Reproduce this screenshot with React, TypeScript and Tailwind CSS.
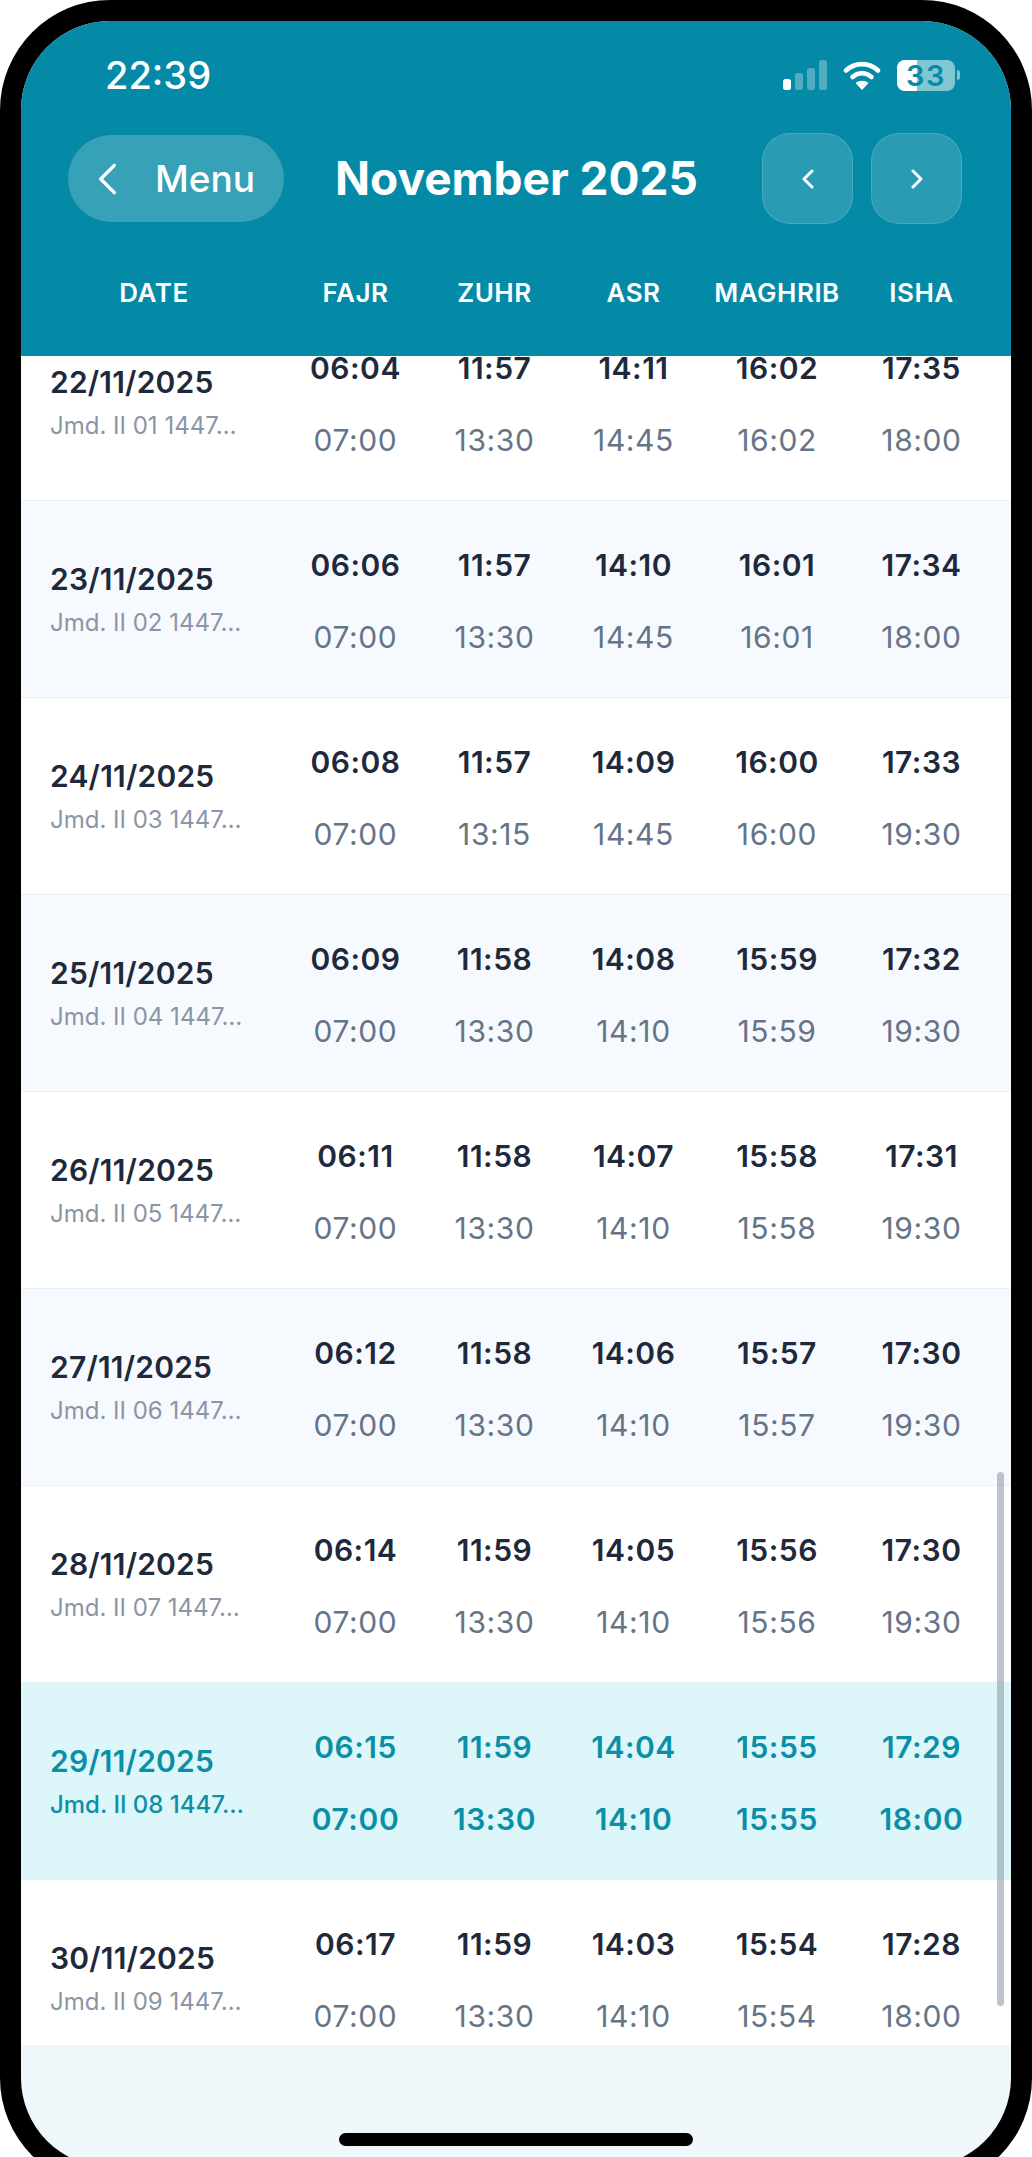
import React from 'react';

type Day = { date: string; hijri: string; athan: string[]; iqama: string[]; today?: boolean };

const days: Day[] = [
  { date: '22/11/2025', hijri: 'Jmd. II 01 1447…', athan: ['06:04', '11:57', '14:11', '16:02', '17:35'], iqama: ['07:00', '13:30', '14:45', '16:02', '18:00'] },
  { date: '23/11/2025', hijri: 'Jmd. II 02 1447…', athan: ['06:06', '11:57', '14:10', '16:01', '17:34'], iqama: ['07:00', '13:30', '14:45', '16:01', '18:00'] },
  { date: '24/11/2025', hijri: 'Jmd. II 03 1447…', athan: ['06:08', '11:57', '14:09', '16:00', '17:33'], iqama: ['07:00', '13:15', '14:45', '16:00', '19:30'] },
  { date: '25/11/2025', hijri: 'Jmd. II 04 1447…', athan: ['06:09', '11:58', '14:08', '15:59', '17:32'], iqama: ['07:00', '13:30', '14:10', '15:59', '19:30'] },
  { date: '26/11/2025', hijri: 'Jmd. II 05 1447…', athan: ['06:11', '11:58', '14:07', '15:58', '17:31'], iqama: ['07:00', '13:30', '14:10', '15:58', '19:30'] },
  { date: '27/11/2025', hijri: 'Jmd. II 06 1447…', athan: ['06:12', '11:58', '14:06', '15:57', '17:30'], iqama: ['07:00', '13:30', '14:10', '15:57', '19:30'] },
  { date: '28/11/2025', hijri: 'Jmd. II 07 1447…', athan: ['06:14', '11:59', '14:05', '15:56', '17:30'], iqama: ['07:00', '13:30', '14:10', '15:56', '19:30'] },
  { date: '29/11/2025', hijri: 'Jmd. II 08 1447…', athan: ['06:15', '11:59', '14:04', '15:55', '17:29'], iqama: ['07:00', '13:30', '14:10', '15:55', '18:00'], today: true },
  { date: '30/11/2025', hijri: 'Jmd. II 09 1447…', athan: ['06:17', '11:59', '14:03', '15:54', '17:28'], iqama: ['07:00', '13:30', '14:10', '15:54', '18:00'] },
];

const columns = 'grid grid-cols-[236px_139px_139px_139px_148px_141px] pl-[29px] pr-[19px]';

function Chevron({ right, className, weight }: { right?: boolean; className: string; weight: number }) {
  return (
    <svg viewBox="0 0 12 20" className={className} fill="none" stroke="currentColor" strokeLinecap="round" strokeLinejoin="round" strokeWidth={weight}>
      <path d={right ? 'M2 2l8 8-8 8' : 'M10 2l-8 8 8 8'} />
    </svg>
  );
}

function StatusBar() {
  return (
    <div className="flex h-[112px] items-center justify-between pb-[4px] pl-[84px] pr-[51px] text-white">
      <span className="text-[38px] leading-none font-medium">22:39</span>
      <div className="flex items-center gap-[16px]">
        <svg viewBox="0 0 44 30" className="h-[30px] w-[44px]" fill="white">
          <rect x="0" y="19" width="8" height="11" rx="2.5" />
          <rect x="12" y="13" width="8" height="17" rx="2.5" opacity="0.3" />
          <rect x="24" y="8" width="8" height="22" rx="2.5" opacity="0.3" />
          <rect x="36" y="0" width="8" height="30" rx="2.5" opacity="0.3" />
        </svg>
        <svg viewBox="0 0 38 30" className="h-[30px] w-[38px]" fill="none" stroke="white" strokeWidth="4.6" strokeLinecap="round">
          <path d="M3 10.5c9-8.5 23-8.5 32 0" />
          <path d="M9.5 17c5.500-5 13.500-5 19 0" />
          <path d="M19 30l-6.500-7c3.500-3 9.500-3 13 0z" fill="white" stroke="none" />
        </svg>
        <div className="flex items-center gap-[2px]">
          <div className="relative h-[31px] w-[58px] rounded-[8px] bg-white/50">
            <div className="h-full w-[20px] rounded-l-[8px] bg-white" />
            <span className="absolute inset-0 flex items-center justify-center text-[29px] leading-none font-semibold tracking-[1.500px] text-[#058ba7]">33</span>
          </div>
          <div className="h-[10px] w-[3px] rounded-r-full bg-white/50" />
        </div>
      </div>
    </div>
  );
}

function TopBar() {
  return (
    <div className="flex items-center pl-[47px] pr-[49px] text-white">
      <div className="flex h-[87px] w-[216px] items-center gap-[37px] rounded-full bg-white/20 pl-[29px]">
        <Chevron weight={2} className="h-[34px] w-[21px]" />
        <span className="text-[37px] leading-none font-medium">Menu</span>
      </div>
      <h1 className="ml-[51px] -translate-y-[1px] text-[46px] leading-none font-bold">November 2025</h1>
      <div className="ml-auto flex gap-[18px]">
        <button className="flex h-[91px] w-[91px] items-center justify-center rounded-[28px] border border-white/15 bg-white/15">
          <Chevron weight={3} className="h-[20px] w-[12px]" />
        </button>
        <button className="flex h-[91px] w-[91px] items-center justify-center rounded-[28px] border border-white/15 bg-white/15">
          <Chevron right weight={3} className="h-[20px] w-[12px]" />
        </button>
      </div>
    </div>
  );
}

function DayRow({ day, index }: { day: Day; index: number }) {
  const bg = day.today ? 'bg-[#ddf6f9]' : index % 2 === 1 ? 'bg-[#f6fafe]' : 'bg-white';
  return (
    <div className={`${columns} h-[197px] shrink-0 items-center border-b border-[#e6f1f5] ${bg}`}>
      <div>
        <div className={`text-[30px] leading-[36px] font-semibold tracking-[0.2px] ${day.today ? 'text-[#0b8fa8]' : 'text-[#1e293b]'}`}>{day.date}</div>
        <div className={`mt-[12px] text-[24px] leading-[28px] whitespace-nowrap ${day.today ? 'font-medium text-[#0b8fa8]' : 'text-[#8a95a5]'}`}>{day.hijri}</div>
      </div>
      {day.athan.map((time, i) => (
        <div key={i} className="flex flex-col items-center gap-[36px] pt-[4px]">
          <span className={`text-[30px] leading-[36px] font-semibold tracking-[0.5px] ${day.today ? 'text-[#0b8fa8]' : 'text-[#1e293b]'}`}>{time}</span>
          <span className={`text-[30px] leading-[36px] tracking-[0.6px] ${day.today ? 'font-semibold text-[#0b8fa8]' : 'text-[#667488]'}`}>{day.iqama[i]}</span>
        </div>
      ))}
    </div>
  );
}

export default function App() {
  return (
    <div className="h-[2157px] w-[1032px] overflow-hidden bg-white font-['Inter',sans-serif]">
      <div className="h-[2188px] w-[1032px] rounded-[110px] bg-black p-[21px]">
        <div className="relative h-full overflow-hidden rounded-[89px] bg-[#eff7fb]">
          <header className="h-[335px] bg-[#048aa6]">
            <StatusBar />
            <TopBar />
            <div className={`${columns} mt-[55px] text-[26px] leading-[28px] font-semibold tracking-[0.5px] text-white`}>
              <div className="pr-[28px] text-center">DATE</div>
              {['FAJR', 'ZUHR', 'ASR', 'MAGHRIB', 'ISHA'].map((name) => (
                <div key={name} className="text-center">{name}</div>
              ))}
            </div>
          </header>
          <div className="relative flex h-[1689px] flex-col overflow-hidden">
            <div className="-mt-[52px] flex flex-col">
              {days.map((day, index) => (
                <DayRow key={day.date} day={day} index={index} />
              ))}
            </div>
            <div className="absolute top-[1116px] right-[7px] h-[534px] w-[7px] rounded-full bg-[#9aa5b1]/65" />
          </div>
          <div className="absolute top-[2112px] left-[318px] h-[13px] w-[354px] rounded-full bg-black" />
        </div>
      </div>
    </div>
  );
}
